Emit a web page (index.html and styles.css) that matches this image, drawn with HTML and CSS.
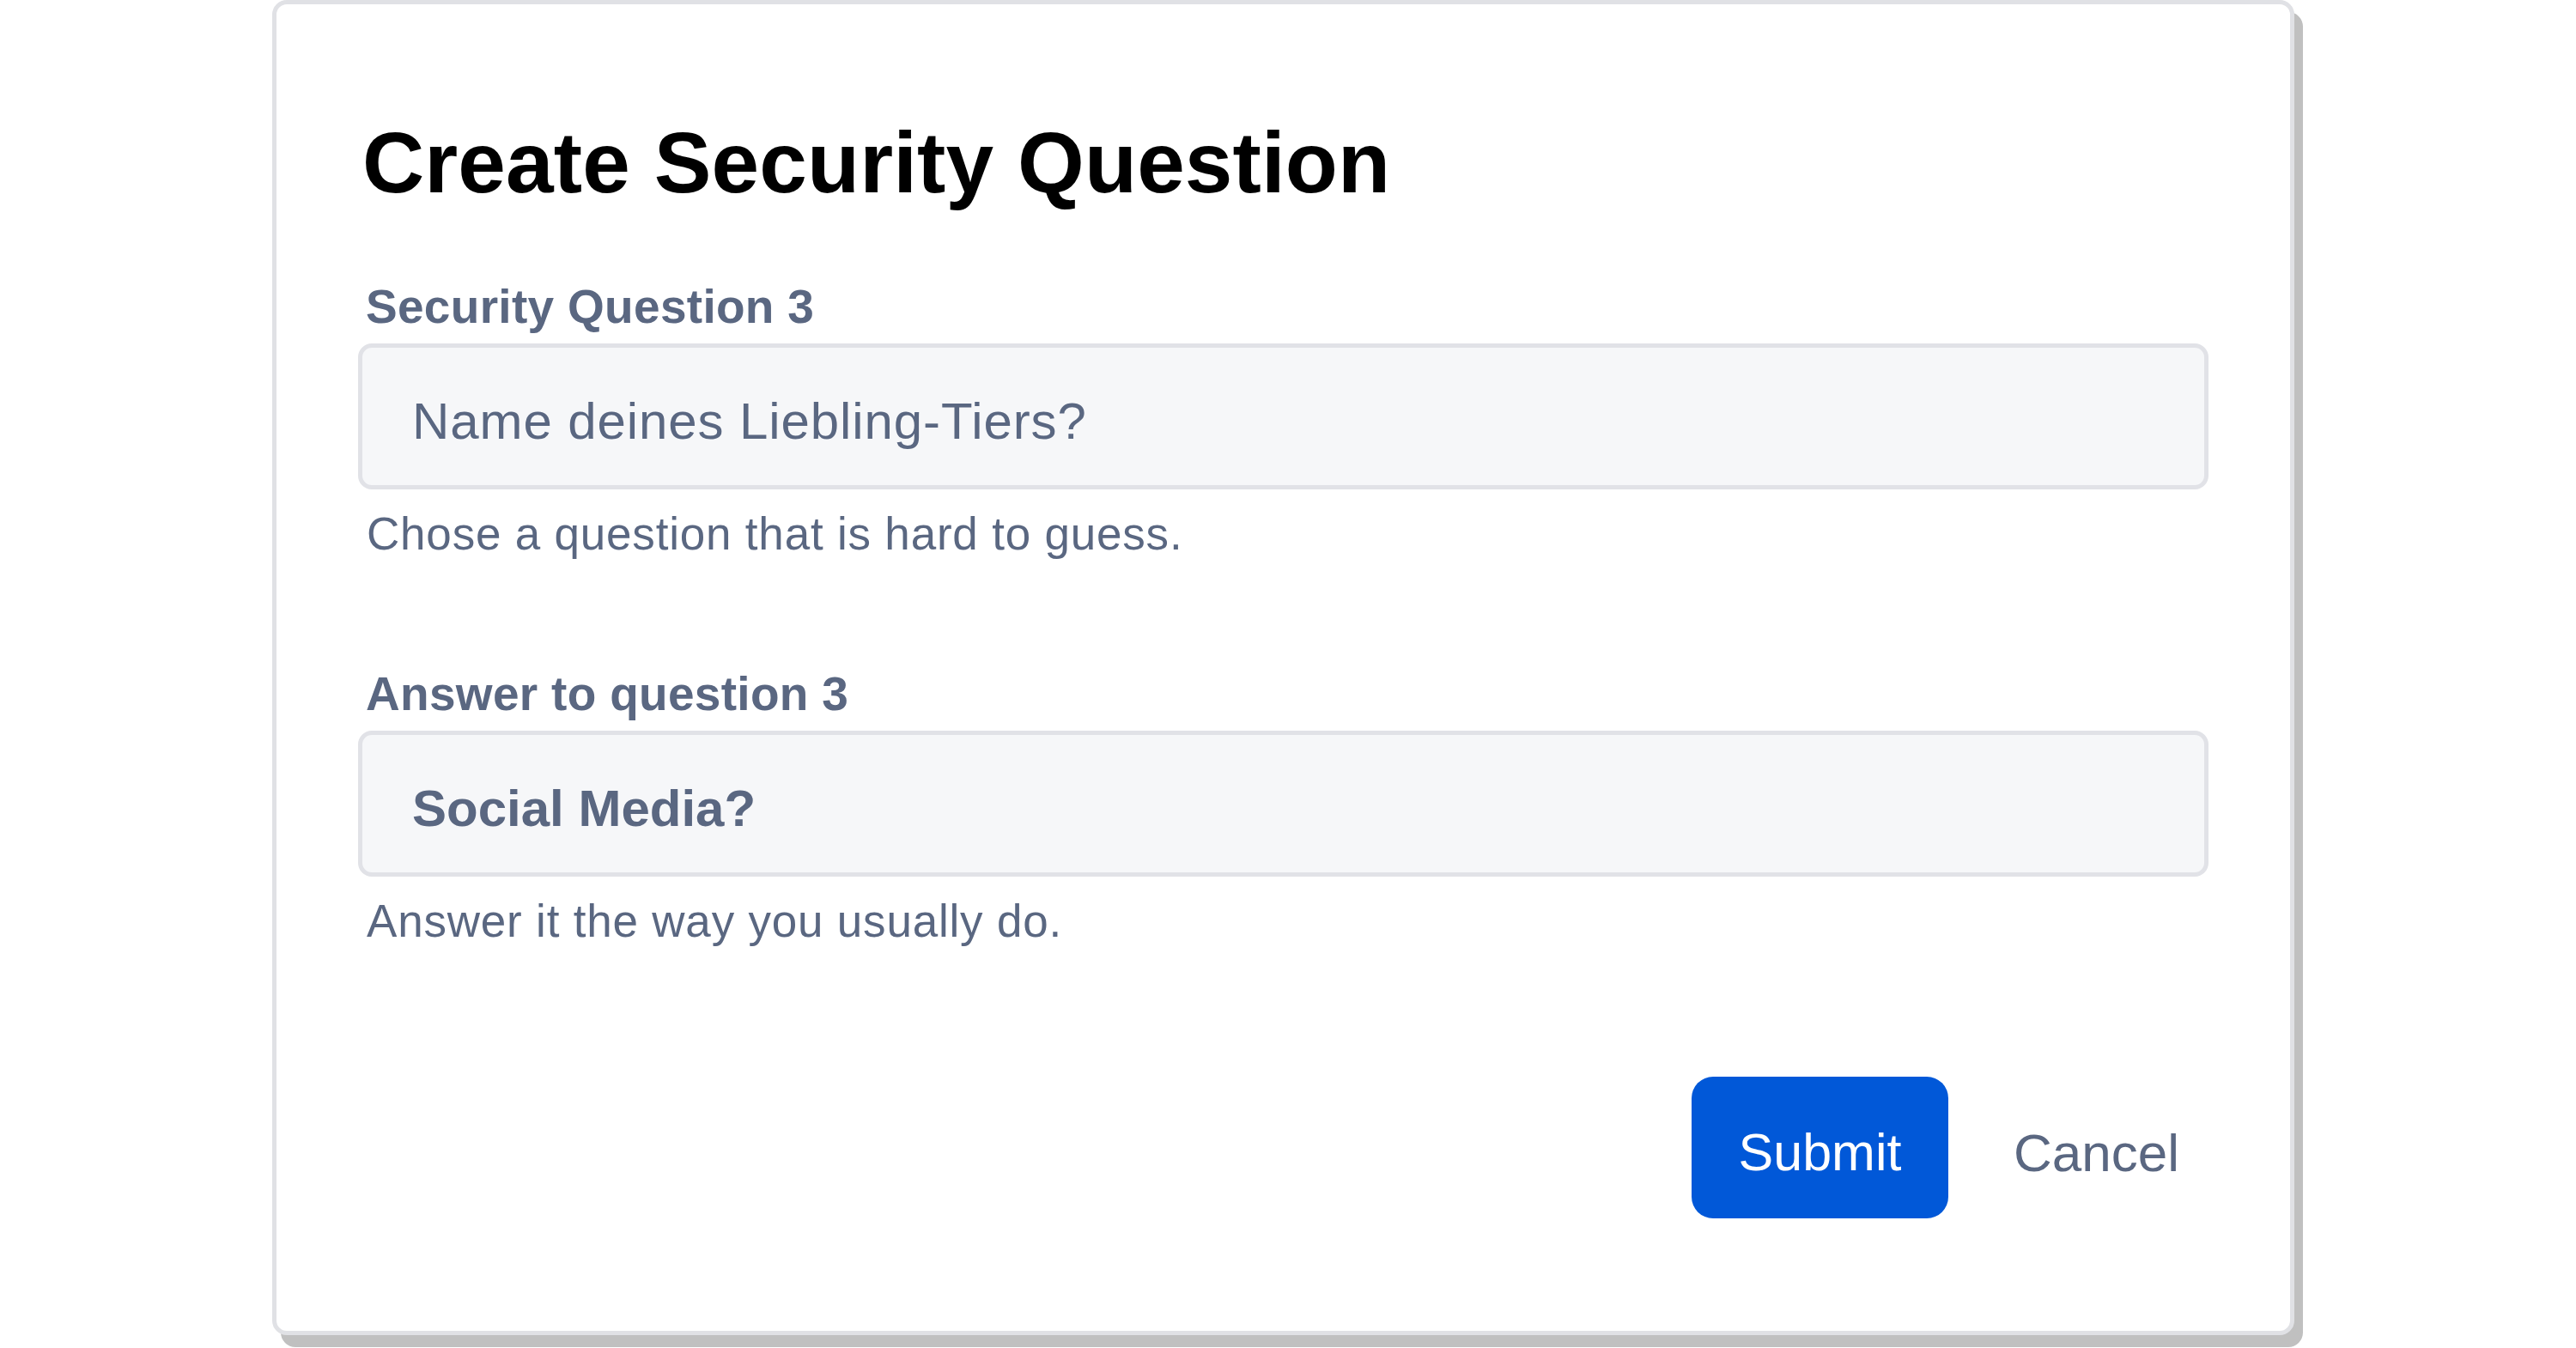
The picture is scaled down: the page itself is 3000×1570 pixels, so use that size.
FILE: index.html
```html
<!DOCTYPE html>
<html lang="en">
<head>
<meta charset="utf-8">
<title>Create Security Question</title>
<link rel="stylesheet" href="styles.css">
</head>
<body>
<main class="page">
  <form class="card">
    <h1 class="title">Create Security Question</h1>
    <div class="field">
      <label class="label" for="q3">Security Question 3</label>
      <input class="input" id="q3" type="text" placeholder="Name deines Liebling-Tiers?">
      <p class="help">Chose a question that is hard to guess.</p>
    </div>
    <div class="field field-second">
      <label class="label" for="a3">Answer to question 3</label>
      <input class="input input-value" id="a3" type="text" value="Social Media?">
      <p class="help">Answer it the way you usually do.</p>
    </div>
    <div class="actions">
      <button class="btn btn-primary" type="button">Submit</button>
      <button class="btn btn-link" type="button">Cancel</button>
    </div>
  </form>
</main>
</body>
</html>
```
FILE: styles.css
```css
* {
  box-sizing: border-box;
}

html, body {
  margin: 0;
  padding: 0;
  background: #ffffff;
}

body {
  font-family: "Liberation Sans", Arial, Helvetica, sans-serif;
  color: #59667f;
  min-height: 1570px;
}

.page {
  padding-left: 317px;
  padding-bottom: 15px;
}

.card {
  width: 2355px;
  height: 1555px;
  border: 5px solid #e0e1e5;
  border-radius: 17px;
  background: #ffffff;
  box-shadow: 10px 14px 0 0 #c0c0c0;
  padding: 126px 95px 0 95px;
  display: flex;
  flex-direction: column;
}

.title {
  margin: 0;
  padding-left: 5px;
  font-size: 100px;
  line-height: 116px;
  font-weight: 700;
  letter-spacing: 0.1px;
  color: #000000;
}

.field {
  margin-top: 78px;
  display: flex;
  flex-direction: column;
}

.field-second {
  margin-top: 122px;
}

.label {
  display: block;
  padding-left: 9px;
  font-size: 55px;
  line-height: 64px;
  font-weight: 700;
  letter-spacing: 0.3px;
  color: #5a6781;
  margin-bottom: 11px;
}

.input {
  display: block;
  width: 100%;
  height: 170px;
  border: 5px solid #e1e2e7;
  border-radius: 16px;
  background: #f6f7f9;
  padding: 10px 40px 0 58px;
  margin: 0;
  font-family: "Liberation Sans", Arial, Helvetica, sans-serif;
  font-size: 60px;
  letter-spacing: 0.9px;
  color: #5a6781;
  outline: none;
}

.input::placeholder {
  color: #5a6781;
  opacity: 1;
}

.input-value {
  font-weight: 700;
  letter-spacing: 0;
}

.help {
  margin: 20px 0 0 0;
  padding-left: 10px;
  font-size: 53px;
  line-height: 64px;
  letter-spacing: 0.8px;
  color: #5a6781;
}

.actions {
  margin-top: 149px;
  display: flex;
  justify-content: flex-end;
  gap: 40px;
}

.btn {
  height: 165px;
  border: 0;
  margin: 0;
  font-family: "Liberation Sans", Arial, Helvetica, sans-serif;
  font-size: 61px;
  line-height: 153px;
  padding-top: 12px;
  cursor: pointer;
}

.btn-primary {
  width: 299px;
  padding-left: 0;
  padding-right: 0;
  background: #0158d8;
  color: #ffffff;
  border-radius: 25px;
}

.btn-link {
  background: transparent;
  color: #5a6781;
  font-size: 62px;
  padding-left: 36px;
  padding-right: 34px;
}
```
